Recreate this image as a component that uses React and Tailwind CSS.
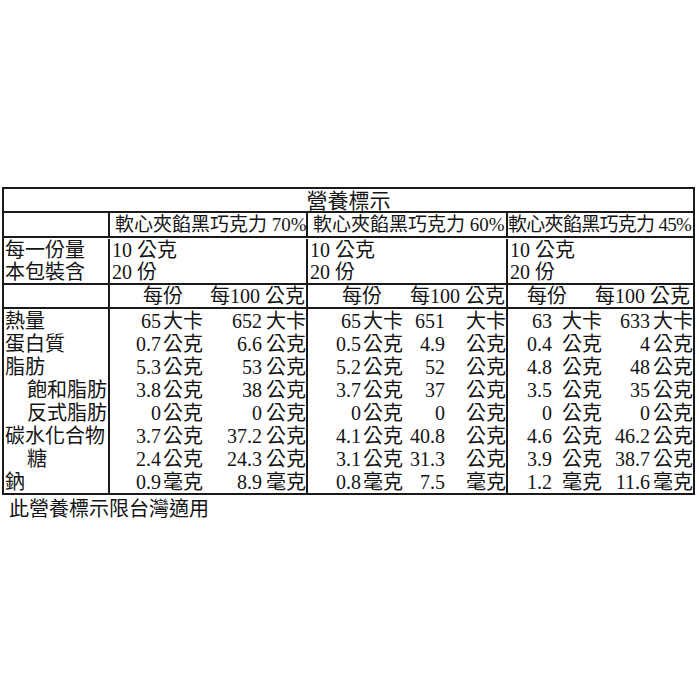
const font = {
  fontFamily: '"Liberation Serif", "Noto Sans CJK TC", serif',
};

const labels = [
  { text: "熱量", indent: "" },
  { text: "蛋白質", indent: "" },
  { text: "脂肪", indent: "" },
  { text: "飽和脂肪", indent: "pl-[22px]" },
  { text: "反式脂肪", indent: "pl-[22px]" },
  { text: "碳水化合物", indent: "" },
  { text: "糖", indent: "pl-[22px]" },
  { text: "鈉", indent: "" },
];

const products = [
  {
    name: "軟心夾餡黑巧克力 70%",
    width: "w-[198px]",
    namePad: "pl-[5px]",
    grid: "grid-cols-[51px_44px_57px_44px]",
    unitPad: "pl-[2px]",
    headPad: "pl-[33px]",
    headRight: "pr-[1px]",
    rows: [
      ["65", "大卡", "652", "大卡"],
      ["0.7", "公克", "6.6", "公克"],
      ["5.3", "公克", "53", "公克"],
      ["3.8", "公克", "38", "公克"],
      ["0", "公克", "0", "公克"],
      ["3.7", "公克", "37.2", "公克"],
      ["2.4", "公克", "24.3", "公克"],
      ["0.9", "毫克", "8.9", "毫克"],
    ],
  },
  {
    name: "軟心夾餡黑巧克力 60%",
    width: "w-[200px]",
    namePad: "pl-[5px]",
    grid: "grid-cols-[53px_44px_40px_61px]",
    unitPad: "pl-[2px]",
    headPad: "pl-[34px]",
    headRight: "pr-[1px]",
    rows: [
      ["65", "大卡", "651", "大卡"],
      ["0.5", "公克", "4.9", "公克"],
      ["5.2", "公克", "52", "公克"],
      ["3.7", "公克", "37", "公克"],
      ["0", "公克", "0", "公克"],
      ["4.1", "公克", "40.8", "公克"],
      ["3.1", "公克", "31.3", "公克"],
      ["0.8", "毫克", "7.5", "毫克"],
    ],
  },
  {
    name: "軟心夾餡黑巧克力 45%",
    width: "w-[187px]",
    namePad: "pl-0 tracking-[-0.7px]",
    grid: "grid-cols-[44px_53px_45px_43px]",
    unitPad: "pl-[10px]",
    headPad: "pl-[19px]",
    headRight: "pr-[3px]",
    rows: [
      ["63", "大卡", "633", "大卡"],
      ["0.4", "公克", "4", "公克"],
      ["4.8", "公克", "48", "公克"],
      ["3.5", "公克", "35", "公克"],
      ["0", "公克", "0", "公克"],
      ["4.6", "公克", "46.2", "公克"],
      ["3.9", "公克", "38.7", "公克"],
      ["1.2", "毫克", "11.6", "毫克"],
    ],
  },
];

function ProductData({ p }) {
  return (
    <div className={`${p.width} border-l-2 border-[#1a1a1a]`}>
      {p.rows.map((r, i) => (
        <div key={i} className={`grid ${p.grid} h-[23px] leading-[24px]`}>
          <span className="text-right">{r[0]}</span>
          <span className={p.unitPad}>{r[1]}</span>
          <span className="text-right">{r[2]}</span>
          <span className="text-right">{r[3]}</span>
        </div>
      ))}
    </div>
  );
}

export default function App() {
  return (
    <div
      className="w-[699px] h-[699px] bg-white text-[#141414] text-[20px] overflow-hidden"
      style={font}
    >
      <div className="ml-[2px] mt-[187px] w-[693px] border-2 border-[#1a1a1a]">
        {/* 標題 */}
        <div className="h-[22px] leading-[24px] text-center text-[21px]">營養標示</div>

        {/* 品名 */}
        <div className="flex border-t-2 border-[#1a1a1a] h-[25px] leading-[23px]">
          <div className="w-[104px]"></div>
          {products.map((p) => (
            <div
              key={p.name}
              className={`${p.width} ${p.namePad} border-l-2 border-[#1a1a1a] text-[19px] whitespace-nowrap`}
            >
              {p.name}
            </div>
          ))}
        </div>

        {/* 份量 */}
        <div className="flex border-t-2 border-[#1a1a1a] h-[47px] leading-[22px] pt-[1px]">
          <div className="w-[104px] pl-[1px]">
            <div>每一份量</div>
            <div>本包裝含</div>
          </div>
          {products.map((p) => (
            <div key={p.name} className={`${p.width} border-l-2 border-[#1a1a1a] pl-[2px]`}>
              <div>10 公克</div>
              <div>20 份</div>
            </div>
          ))}
        </div>

        {/* 欄位 */}
        <div className="flex border-t-2 border-[#1a1a1a] h-[24px] leading-[22px]">
          <div className="w-[104px]"></div>
          {products.map((p) => (
            <div key={p.name} className={`${p.width} border-l-2 border-[#1a1a1a] flex`}>
              <span className={p.headPad}>每份</span>
              <span className={`ml-auto ${p.headRight}`}>每100 公克</span>
            </div>
          ))}
        </div>

        {/* 數值 */}
        <div className="flex border-t-2 border-[#1a1a1a]">
          <div className="w-[104px] pl-[1px]">
            {labels.map((l) => (
              <div key={l.text} className={`h-[23px] leading-[24px] whitespace-nowrap ${l.indent}`}>
                {l.text}
              </div>
            ))}
          </div>
          {products.map((p) => (
            <ProductData key={p.name} p={p} />
          ))}
        </div>
      </div>

      <div className="pl-[9px] leading-[24px] pt-[2px]">此營養標示限台灣適用</div>
    </div>
  );
}
